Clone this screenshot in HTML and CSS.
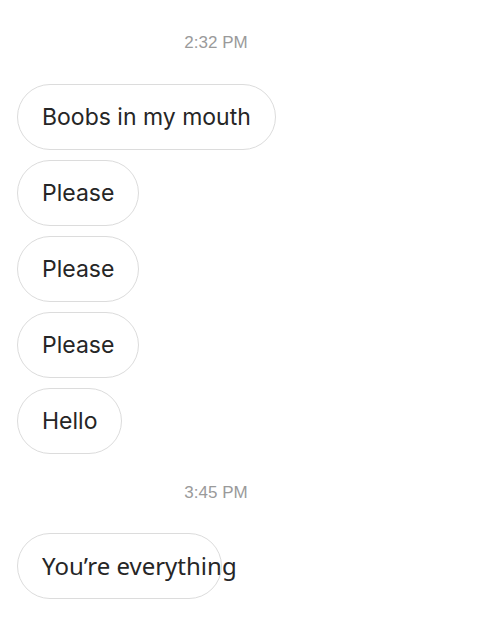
FILE: index.html
```html
<!DOCTYPE html>
<html>
<head>
<meta charset="utf-8">
<link rel="stylesheet" href="styles.css">
</head>
<body>
<div class="thread">
  <div class="time">2:32 PM</div>
  <div class="group">
    <div class="bubble">Boobs in my mouth</div>
    <div class="bubble">Please</div>
    <div class="bubble">Please</div>
    <div class="bubble">Please</div>
    <div class="bubble">Hello</div>
  </div>
  <div class="time">3:45 PM</div>
  <div class="group last">
    <div class="bubble alt">You’re everything</div>
  </div>
</div>
</body>
</html>
```
FILE: styles.css
```css
html, body {
  margin: 0;
  padding: 0;
  background: #ffffff;
  overflow: hidden;
}
.thread {
  display: flex;
  flex-direction: column;
  padding: 33px 0 0 17px;
}
.time {
  width: 398px;
  text-align: center;
  font-family: "Liberation Sans", Arial, sans-serif;
  font-size: 17px;
  line-height: 20px;
  color: #9a9a9a;
}
.group {
  display: flex;
  flex-direction: column;
  align-items: flex-start;
  gap: 10px;
  margin: 31px 0 29px;
}
.group.last {
  margin: 30px 0 0;
}
.bubble {
  box-sizing: border-box;
  height: 66px;
  padding: 19px 24px;
  border: 1px solid #dcdcdc;
  border-radius: 33px;
  font-family: Inter, "Noto Sans", sans-serif;
  font-size: 23px;
  line-height: 26px;
  color: #262626;
  white-space: nowrap;
}
.bubble.alt {
  width: 205px;
  font-family: "Noto Sans", sans-serif;
  font-size: 24px;
}
```
